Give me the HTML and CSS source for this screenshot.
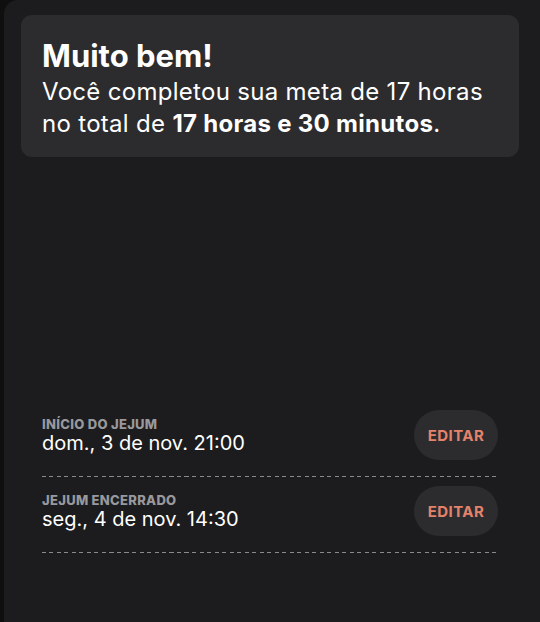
FILE: index.html
```html
<!DOCTYPE html>
<html lang="pt-BR">

<head>
  <meta charset="UTF-8">
  <title>Jejum concluído</title>
  <link rel="stylesheet" href="styles.css">
</head>

<body>
  <div class="sheet">
    <div class="goal-card">
      <h2>Muito bem!</h2>
      <p>Você completou sua meta de 17 horas no total de <b>17 horas e 30 minutos</b>.</p>
    </div>

    <div class="fast-list">
      <div class="fast-row">
        <div class="fast-info">
          <span class="fast-label">INÍCIO DO JEJUM</span>
          <span class="fast-time">dom., 3 de nov. 21:00</span>
        </div>
        <button class="edit-btn">EDITAR</button>
      </div>
      <div class="dash-line"></div>

      <div class="fast-row">
        <div class="fast-info">
          <span class="fast-label">JEJUM ENCERRADO</span>
          <span class="fast-time">seg., 4 de nov. 14:30</span>
        </div>
        <button class="edit-btn">EDITAR</button>
      </div>
      <div class="dash-line"></div>
    </div>
  </div>
</body>

</html>
```

FILE: styles.css
```css
html,
body {
  margin: 0;
  height: 100%;
  background: #0f0f10;
}

body {
  font-family: Inter, 'Noto Sans', sans-serif;
  color: #fff;
}

.sheet {
  background: #1c1c1e;
  min-height: 100%;
  margin-left: 4px;
  border-top-left-radius: 14px;
  padding: 15px 21px 0 17px;
  box-sizing: border-box;
}

.goal-card {
  background: #2c2c2e;
  border-radius: 11px;
  padding: 24px 21px 17px;
}

.goal-card h2 {
  margin: 0;
  font-size: 31px;
  line-height: 34px;
  font-weight: 700;
}

.goal-card p {
  margin: 3px 0 0;
  font-size: 24px;
  line-height: 32px;
  letter-spacing: 0.3px;
}

.goal-card b {
  font-weight: 700;
}

.fast-list {
  margin-top: 253px;
  padding: 0 21px;
}

.fast-row {
  display: flex;
  align-items: center;
  justify-content: space-between;
  height: 50px;
}

.fast-info {
  display: flex;
  flex-direction: column;
}

.fast-label {
  font-size: 13px;
  line-height: 15px;
  font-weight: 800;
  color: #98989d;
  letter-spacing: 0.3px;
}

.fast-time {
  font-size: 20px;
  line-height: 22px;
}

.edit-btn {
  width: 84px;
  height: 50px;
  border: none;
  border-radius: 25px;
  background: #2c2c2e;
  color: #e5826c;
  font-family: inherit;
  font-size: 15px;
  font-weight: 700;
  letter-spacing: 0.4px;
}

.dash-line {
  height: 1px;
  margin: 16px 0 9px;
  background: repeating-linear-gradient(to right, #8a8a8e 0 4px, transparent 4px 7.5px);
}
```
